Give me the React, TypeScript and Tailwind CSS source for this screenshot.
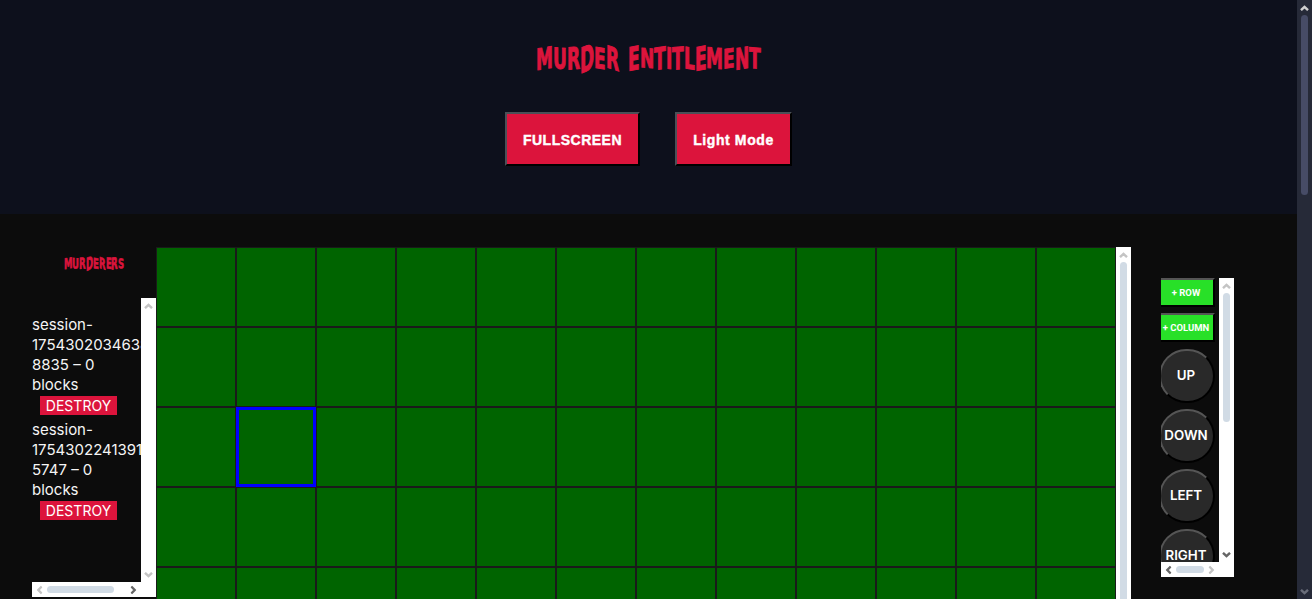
import type { ReactNode } from "react";

const display = "font-['DejaVu_Sans_Condensed','Liberation_Sans_Narrow','DejaVu_Sans',sans-serif] font-bold";

const warp = [
  "-skew-y-6 scale-y-[1.55]",
  "skew-y-3 scale-y-[1.5]",
  "-skew-y-3 scale-y-[1.6]",
  "-skew-y-12 scale-y-[1.85]",
  "skew-y-6 scale-y-[1.5]",
  "skew-y-12 scale-y-[1.6]",
  "skew-y-3 scale-y-[1.6]",
  "-skew-y-6 scale-y-[1.7]",
  "skew-y-3 scale-y-[1.4]",
  "-skew-y-6 scale-y-[1.6]",
  "skew-y-6 scale-y-[1.55]",
  "-skew-y-3 scale-y-[1.6]",
  "skew-y-6 scale-y-[1.55]",
  "-skew-y-6 scale-y-[1.7]",
  "skew-y-3 scale-y-[1.5]",
  "-skew-y-6 scale-y-[1.4]",
];

function Creepy({ text }: { text: string }) {
  return (
    <>
      {text.split("").map((c, i) =>
        c === " " ? (
          <span key={i} className="inline-block w-[9px]" />
        ) : (
          <span key={i} className={`inline-block ${warp[i % warp.length]}`}>
            {c}
          </span>
        )
      )}
    </>
  );
}

type Dir = "up" | "down" | "left" | "right";
const rot: Record<Dir, string> = { up: "rotate-0", down: "rotate-180", left: "-rotate-90", right: "rotate-90" };

function Arrow({ dir, color }: { dir: Dir; color: string }) {
  return (
    <span className="flex h-[15px] w-[15px] shrink-0 items-center justify-center">
      <svg width="9" height="6" viewBox="0 0 9 6" className={rot[dir]}>
        <polyline points="1,5.2 4.5,1.8 8,5.2" fill="none" stroke={color} strokeWidth="2.4" />
      </svg>
    </span>
  );
}

function VBar({ children, thumb, light, dark }: { children?: ReactNode; thumb?: string; light: string; dark: string }) {
  return (
    <div className="flex h-full w-[15px] flex-col items-center bg-white">
      <Arrow dir="up" color={light} />
      <div className="min-h-0 w-full flex-1">{thumb ? <div className={thumb} /> : null}</div>
      <Arrow dir="down" color={dark} />
      {children}
    </div>
  );
}

function Session({ id, tail }: { id: string; tail: string }) {
  return (
    <div className="mb-[5px]">
      <div className="text-[15px] leading-[20px] text-[#f5f5f5] whitespace-nowrap">
        <div>session-</div>
        <div>{id}</div>
        <div>{tail} – 0</div>
        <div>blocks</div>
      </div>
      <button className="ml-[8px] mt-[1px] block h-[19px] w-[77px] bg-[#dc143c] text-center text-[14px] leading-[19px] text-white">
        DESTROY
      </button>
    </div>
  );
}

function RectBtn({ label }: { label: string }) {
  return (
    <button className="block h-[29px] w-[56px] shrink-0 border-2 border-t-[#555555] border-l-[#555555] border-r-black border-b-black bg-[#28e028] pr-[2px] text-center font-['Roboto',sans-serif] text-[9.5px] font-bold leading-[25px] whitespace-nowrap text-white overflow-visible">
      {label}
    </button>
  );
}

function RoundBtn({ label }: { label: string }) {
  return (
    <button className="flex h-[54px] w-[56px] shrink-0 items-center justify-center rounded-full border-2 border-t-[#555555] border-l-[#555555] border-r-black border-b-black bg-[#292929] pr-[2px] text-[13.33px] font-semibold text-white">
      {label}
    </button>
  );
}

export default function App() {
  return (
    <div className="flex h-[599px] w-full overflow-hidden bg-[#0c0c0c] font-['Inter',sans-serif]">
      <div className="min-w-0 flex-1">
        <header className="flex h-[214px] flex-col items-center bg-[#0d101c]">
          <h1 className={`mt-[44px] flex h-[28px] items-center text-[19px] leading-[28px] text-[#dc143c] [-webkit-text-stroke:0.6px_#dc143c] ${display}`}>
            <Creepy text="MURDER ENTITLEMENT" />
          </h1>
          <div className="mt-[40px] flex gap-[35px]">
            <button className="h-[54px] w-[135px] border-2 border-t-[#4b5057] border-l-[#4b5057] border-r-black border-b-black bg-[#dc143c] pt-[2px] text-[14px] font-bold tracking-[0.5px] text-white font-['Liberation_Sans',sans-serif] [-webkit-text-stroke:0.4px_white]">
              FULLSCREEN
            </button>
            <button className="h-[54px] w-[117px] border-2 border-t-[#4b5057] border-l-[#4b5057] border-r-black border-b-black bg-[#dc143c] pt-[2px] text-[14px] font-bold tracking-[0.6px] text-white font-['Liberation_Sans',sans-serif] [-webkit-text-stroke:0.4px_white]">
              Light Mode
            </button>
          </div>
        </header>

        <main className="flex h-[385px] items-start overflow-hidden pl-[32px] pt-[33px]">
          <aside className="w-[124px] shrink-0">
            <h2 className={`box-content flex h-[18px] items-center justify-center pt-[8px] text-[9.5px] leading-[18px] text-[#dc143c] [-webkit-text-stroke:0.4px_#dc143c] ${display}`}>
              <Creepy text="MURDERERS" />
            </h2>
            <div className="mt-[25px] grid h-[299px] w-[124px] grid-cols-[109px_15px] grid-rows-[284px_15px] bg-white">
              <div className="overflow-hidden bg-[#0c0c0c] pt-[17px]">
                <Session id="1754302034638" tail="8835" />
                <Session id="1754302241391" tail="5747" />
              </div>
              <VBar light="#c4c4c4" dark="#c4c4c4" />
              <div className="flex h-[15px] items-center bg-white">
                <Arrow dir="left" color="#c4c4c4" />
                <div className="h-[7px] w-[67px] rounded-full bg-[#d1dbe5]" />
                <span className="ml-auto">
                  <Arrow dir="right" color="#666666" />
                </span>
              </div>
              <div className="bg-white" />
            </div>
          </aside>

          <section className="flex h-[1000px] w-[975px] shrink-0">
            <div className="grid w-[960px] grid-cols-[repeat(12,80px)] auto-rows-[80px]">
              {Array.from({ length: 60 }).map((_, i) => (
                <div
                  key={i}
                  className={
                    i === 25
                      ? "border-[3px] border-[#0000ff] bg-[#006400]"
                      : "border border-[#1a1a1a] bg-[#006400]"
                  }
                />
              ))}
            </div>
            <VBar light="#c4c4c4" dark="#666666" thumb="mx-auto h-[700px] w-[7px] rounded-full bg-[#d1dbe5]" />
          </section>

          <aside className="ml-[30px] mt-[31px] grid h-[299px] w-[73px] shrink-0 grid-cols-[58px_15px] grid-rows-[284px_15px] bg-white">
            <div className="overflow-hidden bg-[#0c0c0c]">
              <div className="-ml-[2px] flex flex-col gap-[6px]">
                <RectBtn label="+ ROW" />
                <RectBtn label="+ COLUMN" />
                <div className="mt-[1px]">
                  <RoundBtn label="UP" />
                </div>
                <RoundBtn label="DOWN" />
                <RoundBtn label="LEFT" />
                <RoundBtn label="RIGHT" />
              </div>
            </div>
            <VBar light="#c4c4c4" dark="#666666" thumb="mx-auto h-[129px] w-[7px] rounded-full bg-[#d1dbe5]" />
            <div className="flex h-[15px] items-center bg-white">
              <Arrow dir="left" color="#666666" />
              <div className="h-[7px] w-[28px] rounded-full bg-[#d1dbe5]" />
              <span className="ml-auto">
                <Arrow dir="right" color="#c4c4c4" />
              </span>
            </div>
            <div className="bg-white" />
          </aside>
        </main>
      </div>

      <div className="flex h-full w-[15px] shrink-0 flex-col items-center bg-[#262a38]">
        <Arrow dir="up" color="#d0d0d0" />
        <div className="min-h-0 w-full flex-1">
          <div className="mx-auto h-[180px] w-[7px] rounded-full bg-[#474c66]" />
        </div>
        <Arrow dir="down" color="#6a6e7a" />
      </div>
    </div>
  );
}
